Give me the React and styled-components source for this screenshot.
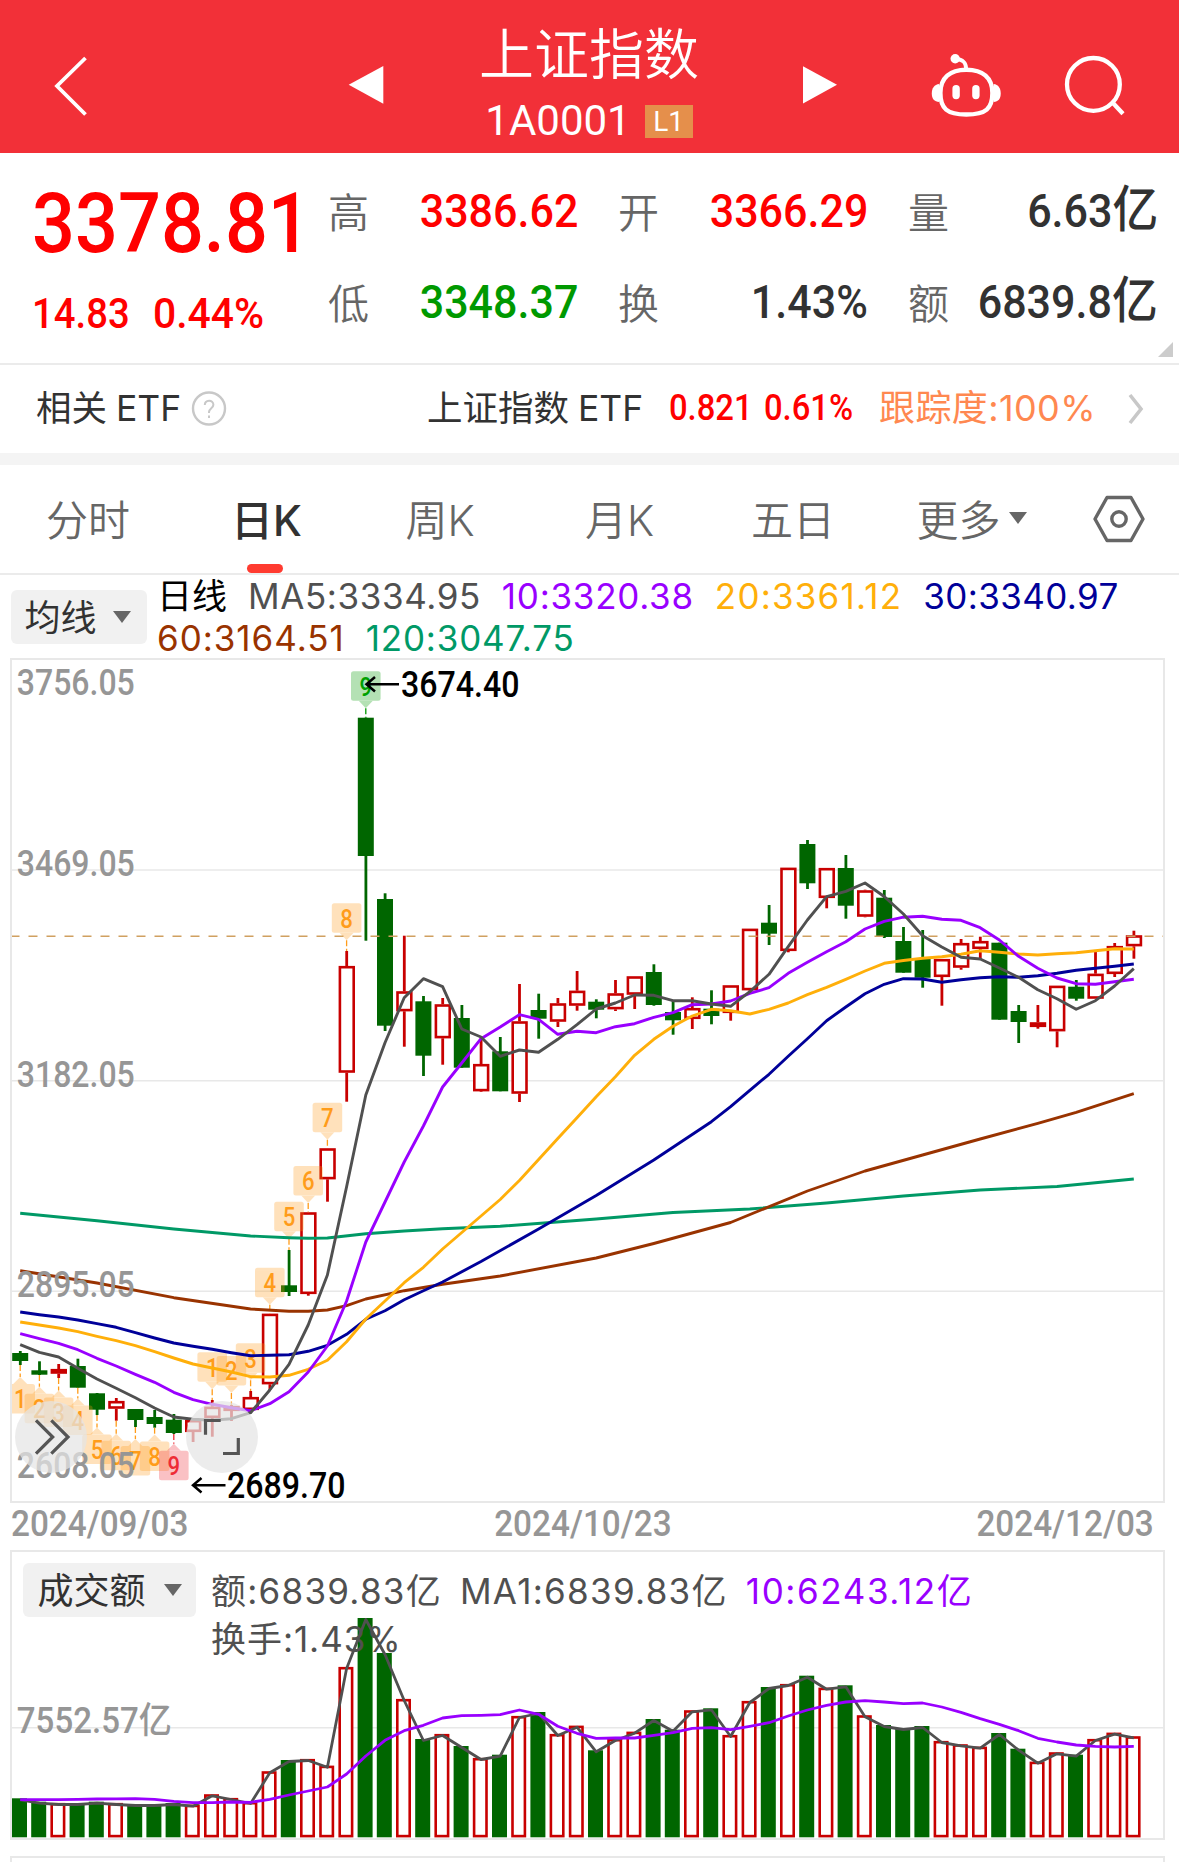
import React from "react";
import styled, { createGlobalStyle } from "styled-components";

const STEP = 19.2;
const FIRST_X = 20.2;
const UP = "#c80000";
const DOWN = "#006600";

// [direction, body top, body bottom, high, low]
const candles = [
  ["d", 1353, 1361, 1351, 1365],
  ["d", 1370.3, 1374.7, 1361.3, 1375],
  ["u", 1369, 1373.7, 1364, 1378],
  ["d", 1366, 1387.7, 1358.7, 1387.7],
  ["d", 1393.3, 1409.7, 1393, 1415],
  ["u", 1401, 1408.7, 1398, 1420.7],
  ["d", 1409, 1420, 1409, 1427],
  ["d", 1417, 1424, 1410, 1427.7],
  ["d", 1419.7, 1433, 1414, 1434],
  ["u", 1420, 1432, 1420, 1442],
  ["u", 1406.7, 1418, 1400, 1436.7],
  ["u", 1406, 1411, 1405, 1421],
  ["u", 1397, 1410, 1391, 1410],
  ["u", 1313.7, 1384.3, 1313.7, 1390],
  ["d", 1285.3, 1292, 1250, 1296],
  ["u", 1212.3, 1294, 1212.3, 1295.7],
  ["u", 1148.3, 1179.3, 1148.3, 1201.7],
  ["u", 966, 1072.7, 951, 1101.7],
  ["d", 717.7, 856, 717.7, 940.7],
  ["d", 899, 1025.7, 893.3, 1031],
  ["u", 991.3, 1011.3, 935.7, 1046.7],
  ["d", 1001.3, 1055.7, 996, 1076],
  ["u", 1004.3, 1038.3, 998, 1064.7],
  ["d", 1018, 1067.7, 1005, 1067.7],
  ["u", 1064, 1091.3, 1038.3, 1092],
  ["d", 1051.3, 1091.3, 1037, 1091.3],
  ["u", 1021.3, 1093.7, 984, 1102],
  ["d", 1010, 1018.7, 993.7, 1038.7],
  ["u", 1003.3, 1021.7, 998, 1027],
  ["u", 990.7, 1005.7, 971, 1010.7],
  ["d", 1001.7, 1009.7, 999.3, 1018.3],
  ["u", 993.3, 1009.3, 980, 1011],
  ["u", 976.3, 994.7, 976.3, 1009],
  ["d", 972, 1005, 964.3, 1005.7],
  ["d", 1012, 1020.3, 1001, 1034.7],
  ["u", 1008, 1019, 997.3, 1029],
  ["d", 1008.7, 1016, 990.3, 1024.3],
  ["u", 985.3, 1013, 985.3, 1020.7],
  ["u", 928.7, 990.3, 928.7, 991],
  ["d", 922.7, 933.7, 905, 945],
  ["u", 867.7, 951, 867.7, 952.3],
  ["d", 844, 883.3, 840, 889],
  ["u", 868, 898, 868, 908.3],
  ["d", 868, 905.7, 855, 918.7],
  ["u", 890.3, 916.7, 889.7, 917.3],
  ["d", 897.7, 937, 890, 938],
  ["d", 941, 972.7, 927, 972.7],
  ["d", 959, 977.7, 930, 987.7],
  ["u", 959, 977, 959, 1005.7],
  ["u", 943, 967.7, 939, 969.7],
  ["u", 941, 949, 936.7, 959],
  ["d", 942.7, 1019.7, 942.7, 1019.7],
  ["d", 1011, 1022, 1005, 1043],
  ["u", 1022.3, 1027, 1005, 1028.7],
  ["u", 985.7, 1031.3, 985.7, 1047.3],
  ["d", 986.7, 998.7, 980, 1000.7],
  ["u", 973.7, 998.7, 952, 998.7],
  ["u", 946, 974, 943, 977],
  ["u", 935.3, 946.3, 930.7, 958.7],
];

const full = (ys) => ys.map((y, i) => [i, y]);

const averages = [
  {
    color: "#009966",
    points: [
      [0, 1213.3], [4, 1220.7], [8, 1229], [12, 1236], [14, 1237.7], [15, 1238.3], [16, 1238],
      [18, 1233.7], [20, 1231], [22, 1228.8], [25, 1226.3], [30, 1219], [34, 1212.5],
      [38, 1209], [42, 1203], [46, 1196], [50, 1190], [54, 1186.5], [58, 1179],
    ],
  },
  {
    color: "#993300",
    points: [
      [0, 1270.7], [4, 1283], [8, 1297.7], [12, 1309], [14, 1311.3], [15, 1311.3], [16, 1310],
      [17, 1305.7], [18, 1299], [20, 1290.7], [22, 1284.3], [25, 1276], [30, 1258],
      [33, 1243.5], [37, 1222.5], [41, 1191], [44, 1171], [47, 1155], [50, 1139],
      [53, 1123.3], [55, 1112.3], [58, 1093.7],
    ],
  },
  {
    color: "#000099",
    points: [
      [0, 1312], [1, 1314.7], [2, 1317], [3, 1320], [4, 1323.7], [5, 1327.3], [6, 1332.7],
      [7, 1338], [8, 1343], [9, 1346.3], [10, 1349.3], [11, 1352.7], [12, 1355.7],
      [13, 1355.3], [14, 1354.7], [15, 1351.3], [16, 1345.3], [17, 1334.3], [18, 1319.3],
      [19, 1310.7], [20, 1299.7], [21, 1290.7], [22, 1282], [24, 1261.5], [27, 1229],
      [30, 1195.5], [33, 1160], [36, 1121.7], [37, 1106.7], [38, 1090.3], [39, 1074.3],
      [40, 1056.3], [41, 1038.7], [42, 1020.7], [43, 1007], [44, 993.7], [45, 984.3],
      [46, 978.7], [47, 979], [48, 982.3], [49, 979.7], [50, 977.7], [51, 976.7],
      [52, 977.3], [53, 975.7], [54, 973.3], [55, 970.3], [56, 968.3], [57, 966.3], [58, 964],
    ],
  },
  {
    color: "#ffaf0a",
    points: full([
      1322, 1325, 1328, 1331.7, 1336.3, 1340.7, 1345.7, 1351.7, 1358, 1364, 1368, 1372, 1376.7,
      1377, 1375.3, 1369.3, 1360.3, 1341.7, 1319, 1301, 1282.7, 1267.3, 1249, 1232.5, 1216,
      1199.5, 1180.5, 1159.5, 1138.5, 1117.7, 1096.7, 1076.7, 1055.3, 1039.3, 1026.3, 1016,
      1009.3, 1010.7, 1014, 1009.3, 1003, 994.7, 987.3, 979.3, 971, 963.3, 960.5, 958.3, 956.7,
      954.3, 950.7, 952.3, 954, 955, 953.7, 952.7, 950.7, 948.7, 949,
    ]),
  },
  {
    color: "#9900ff",
    points: full([
      1333.7, 1338.7, 1343.3, 1349.7, 1358.3, 1366, 1374.3, 1382.3, 1392.3, 1399.7, 1404.3,
      1407.7, 1410.7, 1403.7, 1391.7, 1372, 1346, 1301, 1242, 1202, 1162, 1126, 1087, 1063,
      1038.7, 1027, 1014.7, 1019.3, 1034.3, 1031.3, 1032.7, 1026.7, 1023.7, 1017.3, 1012.7,
      1004.7, 1004, 1001, 993.3, 987.7, 973.3, 962.3, 951.7, 941.7, 929, 921.3, 917.2, 916.3,
      919.3, 920.3, 927.7, 940, 956.3, 968.3, 978, 983.7, 984.3, 981.7, 979.3,
    ]),
  },
  {
    color: "#505050",
    points: full([
      1344.7, 1352.3, 1357, 1368.3, 1379, 1388.3, 1397.7, 1408, 1417, 1419.3, 1420.3, 1418.7,
      1412.7, 1390, 1364.3, 1325, 1275, 1186.7, 1095, 1042.7, 997.7, 978.7, 986.7, 1029, 1037,
      1056.3, 1050, 1052.3, 1039.3, 1024.7, 1009, 1003, 995, 995.3, 1000.7, 1000.7, 1004,
      1006.3, 991.7, 974.3, 946.7, 920, 896.7, 891.3, 883, 896.5, 914, 935.7, 947, 957.3, 959,
      968, 977.3, 989.7, 998.7, 1009.3, 1000.7, 986, 968.7,
    ]),
  },
];

const volumes = [
  1798.3, 1801.7, 1803, 1803, 1801.7, 1803, 1804, 1804, 1803, 1804.7, 1794.3, 1798, 1802, 1771.3,
  1760, 1759, 1765.7, 1667, 1618, 1653, 1699, 1739, 1734, 1746, 1758, 1754.7, 1716, 1712, 1734,
  1725.7, 1750.3, 1739, 1731.7, 1719, 1729.7, 1710.3, 1708.3, 1735, 1701, 1687, 1684, 1675.7,
  1687.7, 1685.3, 1715.3, 1725, 1728, 1726, 1741, 1744.3, 1746.7, 1733, 1748.7, 1761.7, 1752.3,
  1754.7, 1739, 1732.7, 1736.3,
];

const volumeAverage = [
  1799.7, 1799.7, 1799.6, 1799.3, 1799, 1798.8, 1798.7, 1799.3, 1801.3, 1802.7, 1802.7, 1802,
  1802.3, 1799.3, 1795, 1791, 1787, 1774, 1756, 1740.3, 1730.7, 1725.3, 1718, 1715.7, 1715.3,
  1714.7, 1710, 1714.3, 1726.3, 1733.3, 1738.3, 1738, 1738, 1735.3, 1732.7, 1728.3, 1727.7,
  1729.7, 1726.3, 1722.7, 1716, 1710, 1705.3, 1702, 1700.7, 1702, 1703.7, 1703, 1707, 1712.3,
  1718.7, 1724.3, 1730.7, 1738.3, 1742, 1745, 1746.3, 1747, 1746.3,
];

// [candle index, digit, box top, pointer side, tone]
const flags = [
  [0, 1, 1384, "up"],
  [1, 2, 1393.7, "up"],
  [2, 3, 1397.5, "up"],
  [3, 4, 1405.5, "up"],
  [4, 5, 1434.5, "up"],
  [5, 6, 1440.7, "up"],
  [6, 7, 1446, "up"],
  [7, 8, 1441.5, "up"],
  [8, 9, 1450.7, "up", "red"],
  [10, 1, 1352.3, "down"],
  [11, 2, 1356, "down"],
  [12, 3, 1343.3, "down"],
  [13, 4, 1267.7, "down"],
  [14, 5, 1201.7, "down"],
  [15, 6, 1166, "down"],
  [16, 7, 1102.7, "down"],
  [17, 8, 903.3, "down"],
  [18, 9, 671.3, "down", "green"],
];

const flagTones = {
  orange: { fill: "#ff9c1a", text: "#ff9c1a" },
  red: { fill: "#ee2c36", text: "#ee2c36" },
  green: { fill: "#009900", text: "#00a000" },
};

const priceLabels = [
  ["3756.05", 695],
  ["3469.05", 876],
  ["3182.05", 1086.5],
  ["2895.05", 1297],
  ["2608.05", 1477.7],
];

const quotes = [
  { label: "高", value: "3386.62", color: "#ff0000" },
  { label: "开", value: "3366.29", color: "#ff0000" },
  { label: "量", value: "6.63", unit: "亿", color: "#323232" },
  { label: "低", value: "3348.37", color: "#009900" },
  { label: "换", value: "1.43%", color: "#323232" },
  { label: "额", value: "6839.8", unit: "亿", color: "#323232" },
];

const xAt = (i) => FIRST_X + i * STEP;
const toPoints = (points) => points.map(([i, y]) => `${xAt(i)},${y}`).join(" ");

const Flag = ({ index, digit, top, side, tone = "orange" }) => {
  const x = xAt(index);
  const { fill, text } = flagTones[tone];
  const [, , , high, low] = candles[index];
  const tip = side === "up" ? top - 7 : top + 37;
  const base = side === "up" ? top : top + 29.5;
  return (
    <g>
      <line
        x1={x}
        x2={x}
        y1={side === "up" ? low : tip}
        y2={side === "up" ? tip : high}
        stroke={fill}
        strokeWidth="1.3"
        strokeDasharray="6 2.5"
      />
      <g fill={fill} opacity="0.29">
        <rect x={x - 14.8} y={top} width="29.6" height="29.5" rx="2.5" />
        <path d={`M${x - 7} ${base}L${x} ${tip}L${x + 7} ${base}Z`} />
      </g>
      <ChartText
        x={x - 6.3}
        y={top + 24.2}
        fontSize="25"
        textLength="12.6"
        lengthAdjust="spacingAndGlyphs"
        fill={text}
      >
        {digit}
      </ChartText>
    </g>
  );
};

const Candle = ({ index, candle }) => {
  const [dir, top, bottom, high, low] = candle;
  const x = xAt(index);
  if (dir === "d") {
    return (
      <g fill={DOWN}>
        <rect x={x - 1.3} y={high} width="2.8" height={low - high} />
        <rect x={x - 8} y={top} width="16" height={bottom - top} />
      </g>
    );
  }
  return (
    <g fill={UP}>
      <rect x={x - 1.3} y={high} width="2.8" height={top - high} />
      <rect x={x - 1.3} y={bottom} width="2.8" height={low - bottom} />
      <rect
        x={x - 6.7}
        y={top + 1.2}
        width="13.8"
        height={bottom - top - 2.4}
        fill={bottom - top < 5 ? UP : "#fff"}
        stroke={UP}
        strokeWidth="2.6"
      />
    </g>
  );
};

const PriceChart = () => (
  <ChartSvg viewBox="12 660 1151 841">
    {[870, 1080.7, 1291.3].map((y) => (
      <line key={y} x1="12" x2="1163" y1={y} y2={y} stroke="#e8e8e8" strokeWidth="1.6" />
    ))}
    {candles.map((candle, i) => (
      <Candle key={i} index={i} candle={candle} />
    ))}
    <line
      x1="10.5"
      x2="1163"
      y1="936.2"
      y2="936.2"
      stroke="#d0a060"
      strokeWidth="1.4"
      strokeDasharray="9 9"
    />
    {flags.map(([index, digit, top, side, tone]) => (
      <Flag key={index} index={index} digit={digit} top={top} side={side} tone={tone} />
    ))}
    {averages.map(({ color, points }) => (
      <polyline
        key={color}
        points={toPoints(points)}
        fill="none"
        stroke={color}
        strokeWidth="2.9"
        strokeLinejoin="round"
      />
    ))}
    {priceLabels.map(([label, y]) => (
      <ChartText
        key={label}
        x="16.8"
        y={y}
        fontSize="36"
        fill="#969696"
        textLength="118"
        lengthAdjust="spacingAndGlyphs"
      >
        {label}
      </ChartText>
    ))}
    <g fill="none" stroke="#000" strokeWidth="2.5">
      <path d="M399 684.3H367M375 677L366.5 684.3L375 691.5" />
      <path d="M225.5 1485.2H193.5M201.5 1478L193 1485.2L201.5 1492.5" />
    </g>
    <ChartText x="401" y="697" fontSize="36" textLength="118.5" lengthAdjust="spacingAndGlyphs">
      3674.40
    </ChartText>
    <ChartText x="227" y="1497.8" fontSize="36" textLength="118.5" lengthAdjust="spacingAndGlyphs">
      2689.70
    </ChartText>
  </ChartSvg>
);

const VolumeChart = () => (
  <VolumeSvg viewBox="12 1552 1151 286">
    <line x1="12" x2="1163" y1="1727.7" y2="1727.7" stroke="#e8e8e8" strokeWidth="1.4" />
    {volumes.map((top, i) =>
      candles[i][0] === "d" ? (
        <rect
          key={i}
          x={12 + i * STEP}
          y={top}
          width="15"
          height={1837.3 - top}
          fill={DOWN}
        />
      ) : (
        <rect
          key={i}
          x={13.3 + i * STEP}
          y={top + 1.2}
          width="12.4"
          height={1837.3 - top - 2.4}
          fill="#fff"
          stroke={UP}
          strokeWidth="2.6"
        />
      )
    )}
    <g fill="none" strokeWidth="2.8" strokeLinejoin="round">
      <polyline points={toPoints(full(volumes.map((y) => y + 1.5)))} stroke="#505050" />
      <polyline points={toPoints(full(volumeAverage))} stroke="#9900ff" />
    </g>
    <ChartText
      x="16.8"
      y="1732.8"
      fontSize="36"
      fill="#969696"
      textLength="155"
      lengthAdjust="spacingAndGlyphs"
    >
      7552.57亿
    </ChartText>
  </VolumeSvg>
);

const App = () => (
  <Page>
    <GlobalStyle />
    <Header>
      <HeaderIcon width="36" viewBox="52 53 36 66">
        <path d="M85.5 58L57 86L85.5 114.5" fill="none" stroke="#fff" strokeWidth="3.8" />
      </HeaderIcon>
      <HeaderIcon width="36" viewBox="348 53 36 66">
        <path d="M348.7 84.7L383.3 66V103.7Z" fill="#fff" />
      </HeaderIcon>
      <TitleBlock>
        <Title>上证指数</Title>
        <CodeRow>
          <Code>1A0001</Code>
          <LevelBadge>L1</LevelBadge>
        </CodeRow>
      </TitleBlock>
      <HeaderIcon width="36" viewBox="804 53 36 66">
        <path d="M838 84.7L803.5 66V103.7Z" fill="#fff" />
      </HeaderIcon>
      <HeaderIcon width="72" viewBox="931 53 72 66">
        <circle cx="955.2" cy="58.7" r="4.7" fill="#fff" />
        <path
          d="M956 59C963 59.5 966 62.5 966.2 69"
          fill="none"
          stroke="#fff"
          strokeWidth="3.8"
        />
        <path
          d="M966.3 69.7C950 69.7 940.4 78 940.4 93C940.4 108.5 947 114.5 966.3 114.5C986 114.5 992.4 108.5 992.4 93C992.4 78 983 69.7 966.3 69.7Z"
          fill="none"
          stroke="#fff"
          strokeWidth="4.4"
        />
        <path d="M939.2 84C934.3 84.5 931.8 88 931.8 93.5C931.8 99 934.3 101.5 939.2 102Z" fill="#fff" />
        <path d="M993.6 84C998.3 84.5 1000.7 88 1000.7 93.5C1000.7 99 998.3 101.5 993.6 102Z" fill="#fff" />
        <rect x="952.4" y="85" width="7.4" height="14.2" rx="3.7" fill="#fff" />
        <rect x="972.2" y="85" width="7.4" height="14.2" rx="3.7" fill="#fff" />
      </HeaderIcon>
      <HeaderIcon width="62" viewBox="1065 53 62 66">
        <g fill="none" stroke="#fff" strokeWidth="4.3">
          <circle cx="1094.4" cy="84.4" r="26.4" />
          <path d="M1113.5 102.5L1124 113.8" />
        </g>
      </HeaderIcon>
    </Header>

    <QuotePanel>
      <Current>
        <CurrentPrice>3378.81</CurrentPrice>
        <CurrentChange>
          <Change $scale={0.89}>14.83</Change>
          <Change $scale={0.95}>0.44%</Change>
        </CurrentChange>
      </Current>
      <QuoteGrid>
        {quotes.map(({ label, value, unit, color }) => (
          <Quote key={label}>
            <QuoteLabel>{label}</QuoteLabel>
            <QuoteValue $color={color}>
              {value}
              {unit && <Unit>{unit}</Unit>}
            </QuoteValue>
          </Quote>
        ))}
      </QuoteGrid>
      <Corner />
    </QuotePanel>

    <EtfRow>
      <EtfName $width={154}>相关 ETF</EtfName>
      <svg width="38" height="38" viewBox="0 0 38 38">
        <circle cx="19" cy="18.5" r="16" fill="none" stroke="#c8c8c8" strokeWidth="2.4" />
        <path
          d="M14.8 15.1C14.8 9.3 23.4 9.3 23.4 14.7C23.4 18.1 19 18.3 19 22.1V23.1M19 25.5V28.1"
          fill="none"
          stroke="#c8c8c8"
          strokeWidth="2"
        />
      </svg>
      <EtfName $left={199} $width={242}>上证指数 ETF</EtfName>
      <EtfNumber $width={95}>0.821</EtfNumber>
      <EtfNumber $width={115}>0.61%</EtfNumber>
      <Tracking>跟踪度:100%</Tracking>
      <svg width="18" height="34" viewBox="0 0 18 34">
        <path d="M3 3L14 17L3 31" fill="none" stroke="#c8c8c8" strokeWidth="3.6" />
      </svg>
    </EtfRow>

    <Tabs>
      <Tab>分时</Tab>
      <Tab $active>日K</Tab>
      <Tab>周K</Tab>
      <Tab>月K</Tab>
      <Tab>五日</Tab>
      <Tab>
        更多
        <Caret $left={8} />
      </Tab>
      <Tab>
        <svg width="54" height="54" viewBox="0 0 54 54" fill="none" stroke="#666" strokeWidth="3.4">
          <path d="M15 5.5H39L51 27L39 48.5H15L3 27Z" strokeLinejoin="round" />
          <circle cx="27" cy="27" r="7.2" />
        </svg>
      </Tab>
    </Tabs>

    <LegendBar>
      <IndicatorButton $width={136}>
        均线
        <Caret $left={16} />
      </IndicatorButton>
      <Legend>
        <LegendItem $color="#000">日线</LegendItem>
        <LegendItem $color="#505050" $spacing={0.6}>MA5:3334.95</LegendItem>
        <LegendItem $color="#9900ff" $spacing={0.74}>10:3320.38</LegendItem>
        <LegendItem $color="#ffaf0a" $spacing={1.2}>20:3361.12</LegendItem>
        <LegendItem $color="#000099" $spacing={0.4}>30:3340.97</LegendItem>
        <LegendItem $color="#993300" $spacing={0.97}>60:3164.51</LegendItem>
        <LegendItem $color="#009966" $spacing={0.83}>120:3047.75</LegendItem>
      </Legend>
    </LegendBar>

    <PricePanel>
      <PriceChart />
      <RoundButton $left={3}>
        <path d="M21 19.3L37.7 36L21 52.7M36.3 19.3L53 36L36.3 52.7" />
      </RoundButton>
      <RoundButton $left={174}>
        <path d="M19.5 33.7V19.5H34.7M37 52.5H52.3V37" />
      </RoundButton>
    </PricePanel>

    <Dates>
      <DateLabel $origin="left">2024/09/03</DateLabel>
      <DateLabel $origin="center">2024/10/23</DateLabel>
      <DateLabel $origin="right">2024/12/03</DateLabel>
    </Dates>

    <VolumePanel>
      <VolumeChart />
      <IndicatorButton $width={173}>
        成交额
        <Caret $left={18} />
      </IndicatorButton>
      <VolumeLegend>
        <LegendItem $color="#505050" $spacing={1.25}>额:6839.83亿</LegendItem>
        <LegendItem $color="#505050" $spacing={1.3}>MA1:6839.83亿</LegendItem>
        <LegendItem $color="#9900ff" $spacing={1.6}>10:6243.12亿</LegendItem>
        <LegendItem $color="#505050" $spacing={0.95}>换手:1.43%</LegendItem>
      </VolumeLegend>
    </VolumePanel>
    <NextPanel />
  </Page>
);

const RoundButton = ({ $left, children }) => (
  <RoundButtonBase $left={$left}>
    <svg width="72" height="72" fill="none" stroke="#555" strokeWidth="3.2">
      {children}
    </svg>
  </RoundButtonBase>
);

const GlobalStyle = createGlobalStyle`
  * {
    box-sizing: border-box;
  }

  body {
    margin: 0;
    background: #fff;
  }

  svg {
    display: block;
    flex: none;
  }
`;

const Page = styled.div`
  width: 1179px;
  height: 1862px;
  overflow: hidden;
  background: #fff;
  font-family: "Inter", "Noto Sans CJK SC", sans-serif;
`;

const Header = styled.header`
  display: grid;
  grid-template-columns: 296px 72px 383px 128px 133px 62px;
  align-items: start;
  padding-left: 52px;
  height: 153px;
  background: #f23038;
  color: #fff;
`;

const HeaderIcon = styled.svg`
  height: 66px;
  margin-top: 53px;
`;

const TitleBlock = styled.div`
  width: 338px;
  text-align: center;
`;

const Title = styled.h1`
  margin: 22px 0 0;
  font-family: "Noto Sans CJK SC", sans-serif;
  font-size: 55px;
  font-weight: 350;
  line-height: 57px;
`;

const CodeRow = styled.div`
  display: flex;
  justify-content: center;
  align-items: flex-start;
  gap: 14px;
  margin-top: 22px;
`;

const Code = styled.span`
  font-family: "Roboto", sans-serif;
  font-size: 42px;
  font-weight: 400;
  line-height: 40px;
`;

const LevelBadge = styled.span`
  width: 48px;
  height: 33px;
  margin-top: 4px;
  background: #e58f4b;
  font-family: "Roboto", sans-serif;
  font-size: 28px;
  font-weight: 400;
  line-height: 33px;
`;

const QuotePanel = styled.section`
  position: relative;
  display: flex;
  height: 212px;
  border-bottom: 2px solid #ebebeb;
`;

const Current = styled.div`
  width: 328px;
  padding: 29px 0 0 32px;
  color: #ff0000;
  font-family: "Roboto", sans-serif;
  font-weight: 500;
`;

const CurrentPrice = styled.div`
  font-size: 84px;
  line-height: 84px;
  transform: scaleX(0.9);
  transform-origin: left;
`;

const CurrentChange = styled.div`
  display: flex;
  margin-top: 25px;
`;

const Change = styled.span`
  width: 121px;
  font-size: 43px;
  line-height: 44px;
  transform: scaleX(${(props) => props.$scale});
  transform-origin: left;
`;

const QuoteGrid = styled.div`
  display: grid;
  grid-template-columns: 250px 250px 250px;
  grid-template-rows: 91px 91px;
  column-gap: 40px;
  padding-top: 12px;
`;

const Quote = styled.div`
  display: flex;
  justify-content: space-between;
  align-items: center;
  white-space: nowrap;
`;

const QuoteLabel = styled.span`
  color: #666;
  font-family: "Noto Sans CJK SC", sans-serif;
  font-size: 41px;
  font-weight: 350;
  line-height: 91px;
`;

const QuoteValue = styled.span`
  color: ${(props) => props.$color};
  font-family: "Roboto", "Noto Sans CJK SC", sans-serif;
  font-size: 47px;
  font-weight: 500;
  line-height: 91px;
  transform: scaleX(0.915);
  transform-origin: right;
`;

const Unit = styled.small`
  font-size: 50px;
`;

const Corner = styled.i`
  position: absolute;
  right: 6px;
  bottom: 6px;
  border-left: 15px solid transparent;
  border-bottom: 15px solid #ccc;
`;

const EtfRow = styled.section`
  display: flex;
  align-items: center;
  height: 100px;
  padding-left: 36px;
  border-bottom: 12px solid #f4f4f4;
  white-space: nowrap;
`;

const EtfName = styled.span`
  width: ${(props) => props.$width}px;
  margin-left: ${(props) => props.$left || 0}px;
  padding-bottom: 7px;
  color: #323232;
  font-size: 35.5px;
  word-spacing: -1px;
`;

const EtfNumber = styled.span`
  width: ${(props) => props.$width}px;
  padding-bottom: 3px;
  color: #ff0000;
  font-family: "Roboto", sans-serif;
  font-size: 36px;
  font-weight: 500;
  transform: scaleX(0.91);
  transform-origin: left;
`;

const Tracking = styled.span`
  width: 248px;
  padding-bottom: 8px;
  color: #ff8850;
  font-size: 36px;
  letter-spacing: 0.4px;
`;

const Tabs = styled.nav`
  display: grid;
  grid-template-columns: 176px 181px 166px 193px 154px 203px 92px;
  height: 110px;
  border-bottom: 2px solid #ebebeb;
`;

const Tab = styled.div`
  position: relative;
  display: flex;
  justify-content: center;
  align-items: center;
  padding-bottom: 3px;
  color: ${(props) => (props.$active ? "#323232" : "#666")};
  font-size: 42px;
  font-weight: ${(props) => (props.$active ? 500 : 350)};

  > svg {
    margin-top: 2px;
  }

  &::after {
    content: "";
    display: ${(props) => (props.$active ? "block" : "none")};
    position: absolute;
    bottom: 0;
    left: 71px;
    width: 36px;
    height: 9px;
    border-radius: 4.5px;
    background: #ff3b30;
  }
`;

const Caret = styled.i`
  margin-left: ${(props) => props.$left}px;
  border: 9px solid transparent;
  border-top: 12px solid #666;
  border-bottom: 0;
`;

const LegendBar = styled.div`
  display: flex;
  height: 83px;
  padding: 0 0 0 11px;

  > button {
    margin-top: 15px;
    padding-right: 3px;
  }
`;

const IndicatorButton = styled.button`
  position: relative;
  display: flex;
  flex: none;
  justify-content: center;
  align-items: center;
  width: ${(props) => props.$width}px;
  height: 54px;
  padding: 0 0 5px;
  border: 0;
  border-radius: 6px;
  background: #f1f1f1;
  color: #323232;
  font-family: inherit;
  font-size: 36px;

  > i {
    margin-top: 4px;
  }
`;

const Legend = styled.div`
  display: flex;
  flex-wrap: wrap;
  align-content: flex-start;
  width: 1010px;
  margin-left: 10px;
  column-gap: 21px;
`;

const LegendItem = styled.span`
  color: ${(props) => props.$color};
  font-size: 35px;
  line-height: 42px;
  letter-spacing: ${(props) => props.$spacing || 0}px;
  white-space: nowrap;
`;

const PricePanel = styled.section`
  position: relative;
  width: 1155px;
  height: 845px;
  margin-left: 10px;
  border: 2px solid #e8e8e8;
`;

const ChartSvg = styled.svg`
  width: 1151px;
  height: 841px;
`;

const ChartText = styled.text`
  font-family: "Roboto", "Noto Sans CJK SC", sans-serif;
  font-weight: 500;
`;

const RoundButtonBase = styled.button`
  position: absolute;
  left: ${(props) => props.$left}px;
  top: 741px;
  width: 72px;
  height: 72px;
  padding: 0;
  border: 0;
  border-radius: 50%;
  background: rgba(228, 228, 228, 0.72);
`;

const Dates = styled.div`
  display: flex;
  justify-content: space-between;
  width: 1143px;
  height: 47px;
  margin-left: 11px;
`;

const DateLabel = styled.span`
  color: #969696;
  font-family: "Roboto", sans-serif;
  font-size: 36px;
  font-weight: 500;
  line-height: 43px;
  transform: scaleX(0.925);
  transform-origin: ${(props) => props.$origin};
`;

const VolumePanel = styled.section`
  position: relative;
  display: flex;
  width: 1155px;
  height: 290px;
  margin-left: 10px;
  padding: 11px 0 0 11px;
  border: 2px solid #e8e8e8;
`;

const VolumeSvg = styled.svg`
  position: absolute;
  left: 0;
  top: 0;
  width: 1151px;
  height: 286px;
`;

const VolumeLegend = styled(Legend)`
  position: relative;
  width: 820px;
  margin-left: 15px;
  padding-top: 7px;
  column-gap: 18px;
  row-gap: 6px;
`;

const NextPanel = styled.section`
  width: 1155px;
  height: 40px;
  margin: 16px 0 0 10px;
  border: 2px solid #e8e8e8;
`;

export default App;
